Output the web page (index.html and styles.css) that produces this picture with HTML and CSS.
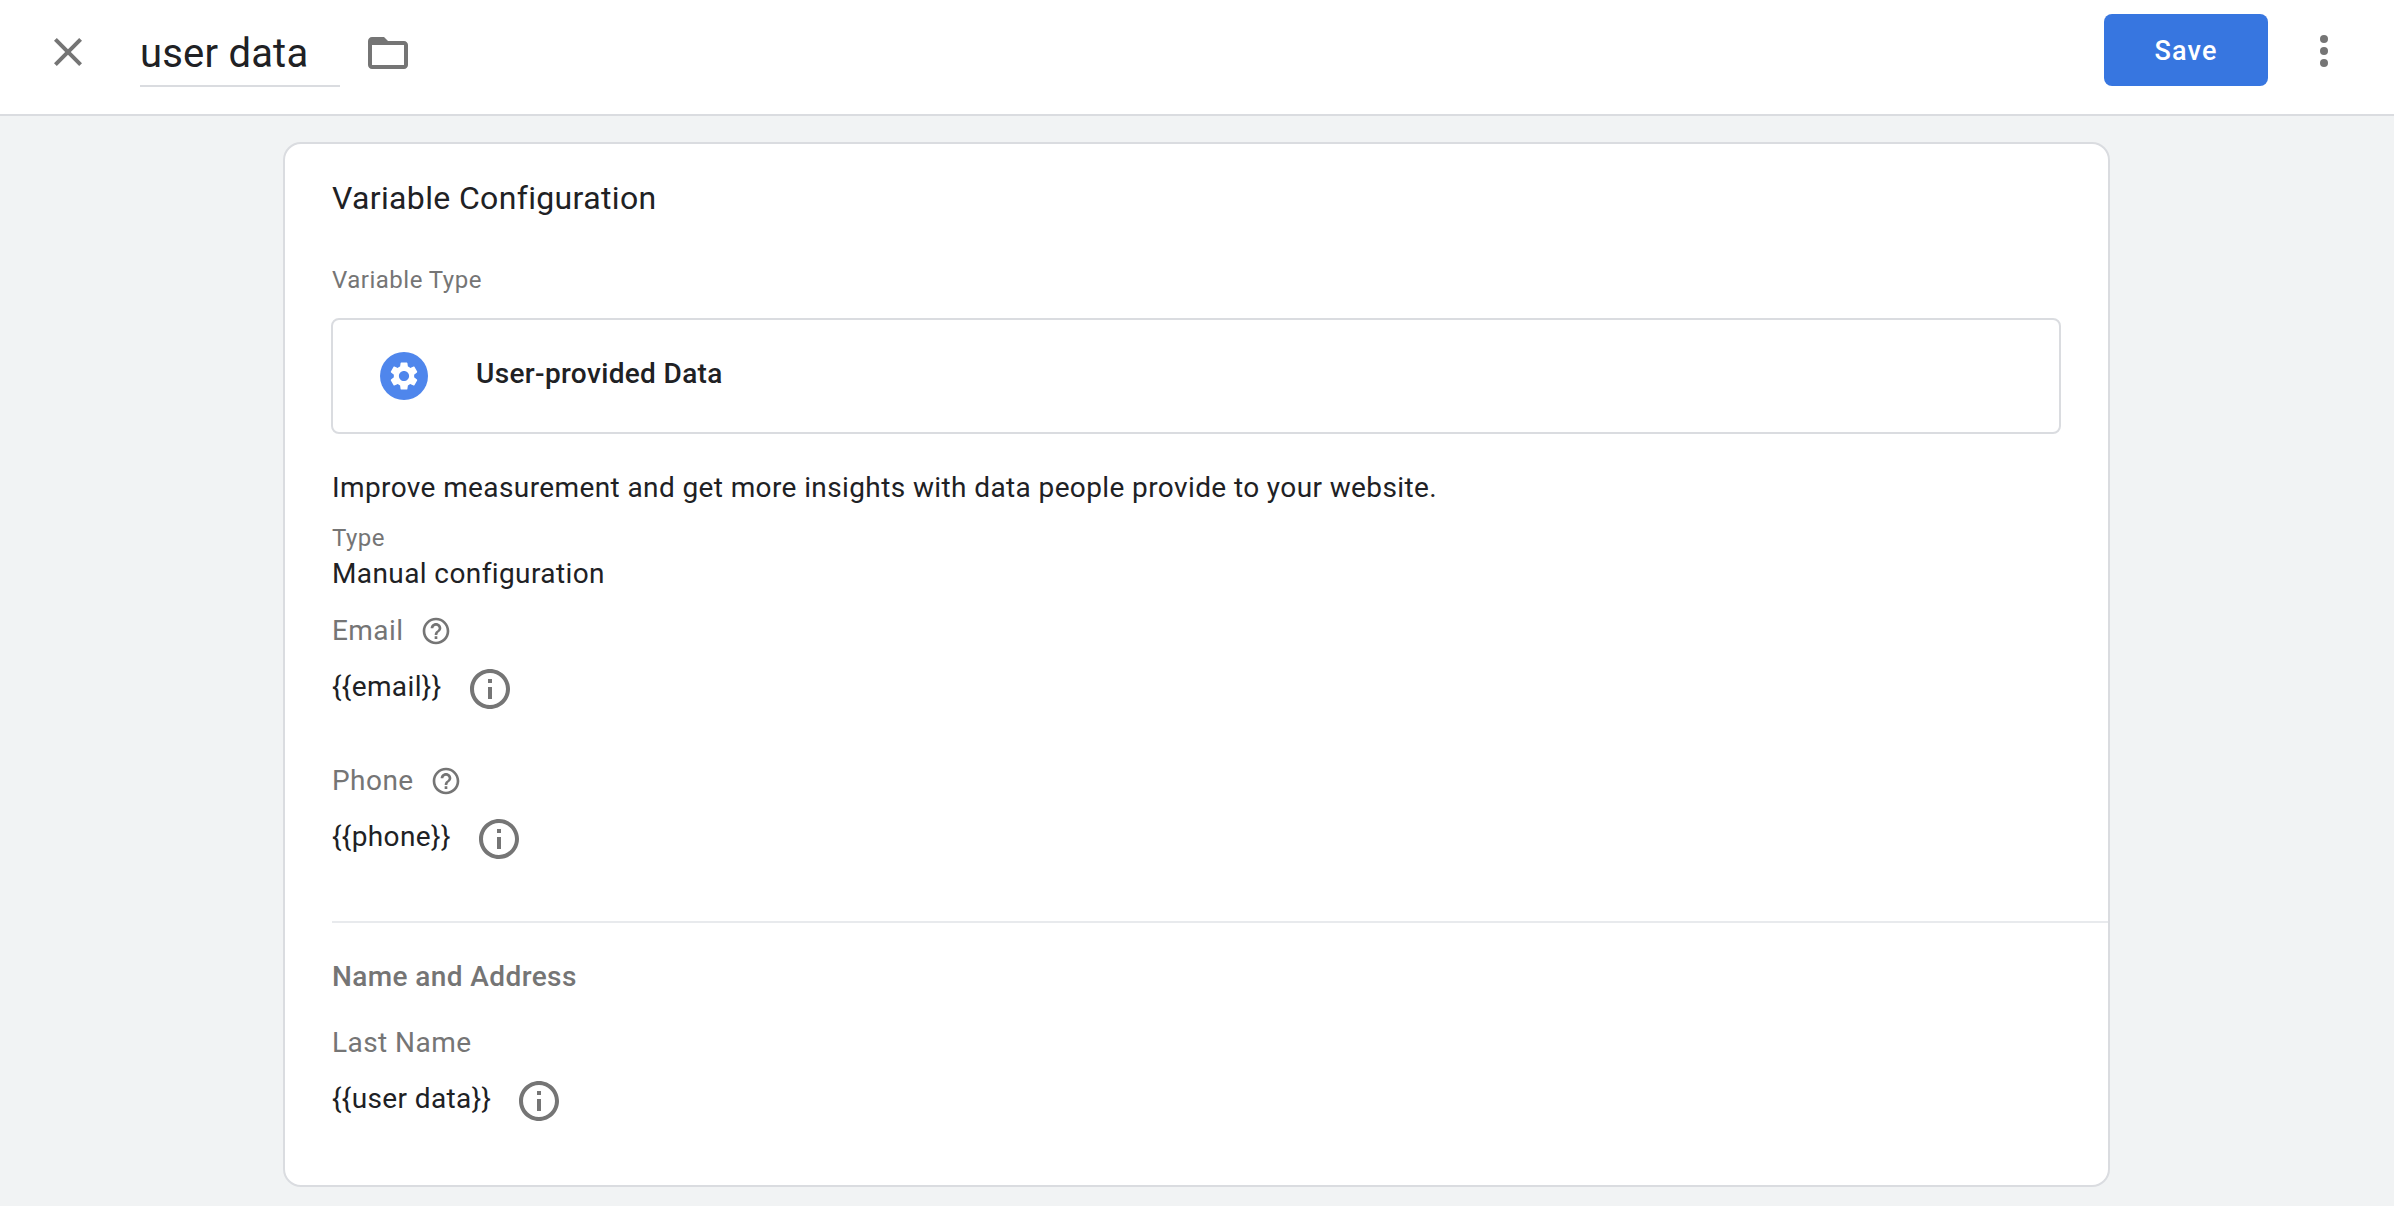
FILE: index.html
```html
<!DOCTYPE html>
<html lang="en">
<head>
<meta charset="utf-8">
<title>user data</title>
<link rel="stylesheet" href="styles.css">
</head>
<body>
<header class="topbar">
  <svg class="icon close" viewBox="0 0 24 24"><path d="M19 6.41L17.59 5 12 10.59 6.41 5 5 6.41 10.59 12 5 17.59 6.41 19 12 13.41 17.59 19 19 17.59 13.41 12z"/></svg>
  <div class="name-field">user data</div>
  <svg class="icon folder" viewBox="0 0 24 24"><path d="M20 6h-8l-2-2H4c-1.1 0-1.99.9-1.99 2L2 18c0 1.1.9 2 2 2h16c1.1 0 2-.9 2-2V8c0-1.1-.9-2-2-2zm0 12H4V8h16v10z"/></svg>
  <button class="save">Save</button>
  <svg class="icon kebab" viewBox="0 0 48 48"><circle cx="24" cy="12" r="4"/><circle cx="24" cy="24" r="4"/><circle cx="24" cy="36" r="4"/></svg>
</header>
<main class="page">
  <section class="card">
    <h1 class="card-title">Variable Configuration</h1>
    <div class="small-label type-head">Variable Type</div>
    <div class="type-box">
      <span class="gear-badge"><svg class="gear" viewBox="0 0 24 24"><path d="M19.14 12.94c.04-.3.06-.61.06-.94 0-.32-.02-.64-.07-.94l2.03-1.58c.18-.14.23-.41.12-.61l-1.92-3.32c-.12-.22-.37-.29-.59-.22l-2.39.96c-.5-.38-1.03-.7-1.62-.94l-.36-2.54c-.04-.24-.24-.41-.48-.41h-3.84c-.24 0-.43.17-.47.41l-.36 2.54c-.59.24-1.13.57-1.62.94l-2.39-.96c-.22-.08-.47 0-.59.22L2.74 8.87c-.12.21-.08.47.12.61l2.03 1.58c-.05.3-.09.63-.09.94s.02.64.07.94l-2.03 1.58c-.18.14-.23.41-.12.61l1.92 3.32c.12.22.37.29.59.22l2.39-.96c.5.38 1.03.7 1.62.94l.36 2.54c.05.24.24.41.48.41h3.84c.24 0 .44-.17.47-.41l.36-2.54c.59-.24 1.13-.56 1.62-.94l2.39.96c.22.08.47 0 .59-.22l1.92-3.32c.12-.22.07-.47-.12-.61l-2.01-1.58zM12 15.6c-1.98 0-3.6-1.62-3.6-3.6s1.62-3.6 3.6-3.6 3.6 1.62 3.6 3.6-1.62 3.6-3.6 3.6z"/></svg></span>
      <span class="type-name">User-provided Data</span>
    </div>
    <p class="body-text description">Improve measurement and get more insights with data people provide to your website.</p>
    <div class="small-label type-label">Type</div>
    <div class="body-text manual">Manual configuration</div>

    <div class="field-label email-label">Email
      <svg class="help" viewBox="0 0 24 24"><path d="M11 18h2v-2h-2v2zm1-16C6.48 2 2 6.48 2 12s4.48 10 10 10 10-4.48 10-10S17.52 2 12 2zm0 18c-4.41 0-8-3.59-8-8s3.59-8 8-8 8 3.59 8 8-3.59 8-8 8zm0-14c-2.21 0-4 1.79-4 4h2c0-1.1.9-2 2-2s2 .9 2 2c0 2-3 1.75-3 5h2c0-2.25 3-2.5 3-5 0-2.21-1.79-4-4-4z"/></svg>
    </div>
    <div class="value-row">
      <span class="value">{{email}}</span>
      <svg class="info" viewBox="0 0 24 24"><path d="M11 7h2v2h-2zm0 4h2v6h-2zm1-9C6.48 2 2 6.48 2 12s4.48 10 10 10 10-4.48 10-10S17.52 2 12 2zm0 18c-4.41 0-8-3.59-8-8s3.59-8 8-8 8 3.59 8 8-3.59 8-8 8z"/></svg>
    </div>

    <div class="field-label phone-label">Phone
      <svg class="help" viewBox="0 0 24 24"><path d="M11 18h2v-2h-2v2zm1-16C6.48 2 2 6.48 2 12s4.48 10 10 10 10-4.48 10-10S17.52 2 12 2zm0 18c-4.41 0-8-3.59-8-8s3.59-8 8-8 8 3.59 8 8-3.59 8-8 8zm0-14c-2.21 0-4 1.79-4 4h2c0-1.1.9-2 2-2s2 .9 2 2c0 2-3 1.75-3 5h2c0-2.25 3-2.5 3-5 0-2.21-1.79-4-4-4z"/></svg>
    </div>
    <div class="value-row">
      <span class="value">{{phone}}</span>
      <svg class="info" viewBox="0 0 24 24"><path d="M11 7h2v2h-2zm0 4h2v6h-2zm1-9C6.48 2 2 6.48 2 12s4.48 10 10 10 10-4.48 10-10S17.52 2 12 2zm0 18c-4.41 0-8-3.59-8-8s3.59-8 8-8 8 3.59 8 8-3.59 8-8 8z"/></svg>
    </div>

    <hr class="divider">
    <h2 class="section-title">Name and Address</h2>
    <div class="field-label last-name">Last Name</div>
    <div class="value-row">
      <span class="value">{{user data}}</span>
      <svg class="info" viewBox="0 0 24 24"><path d="M11 7h2v2h-2zm0 4h2v6h-2zm1-9C6.48 2 2 6.48 2 12s4.48 10 10 10 10-4.48 10-10S17.52 2 12 2zm0 18c-4.41 0-8-3.59-8-8s3.59-8 8-8 8 3.59 8 8-3.59 8-8 8z"/></svg>
    </div>
  </section>
</main>
</body>
</html>
```
FILE: styles.css
```css
* { box-sizing: border-box; }
html, body { margin: 0; height: 100%; }
body {
  background: #f1f3f4;
  color: #202124;
  font-family: Roboto, "Liberation Sans", sans-serif;
  overflow: hidden;
}
.topbar {
  display: flex;
  align-items: flex-start;
  height: 116px;
  padding: 14px 46px 0 44px;
  background: #fff;
  border-bottom: 2px solid #dadce0;
}
.icon { fill: #757575; width: 48px; height: 48px; flex: none; }
.close { margin-top: 14px; }
.name-field {
  width: 200px;
  height: 73px;
  margin-left: 48px;
  padding-top: 16px;
  font-size: 40px;
  line-height: 48px;
  letter-spacing: 0.2px;
  border-bottom: 2px solid #dadce0;
}
.folder { margin: 15px 0 0 24px; }
.save {
  width: 164px;
  height: 72px;
  margin-left: auto;
  padding: 2px 0 0;
  border: 0;
  border-radius: 8px;
  background: #3776e0;
  color: #fff;
  font: 500 27px/70px Roboto, sans-serif;
  letter-spacing: 1.2px;
}
.kebab { margin: 13px 0 0 32px; }

.page { padding: 26px 0 0 283px; }
.card {
  width: 1827px;
  padding: 34px 0 60px 47px;
  background: #fff;
  border: 2px solid #dadce0;
  border-radius: 18px;
}
.card-title { margin: 0; font-size: 32px; line-height: 40px; font-weight: 400; letter-spacing: 0.35px; }
.small-label { font-size: 24px; line-height: 30px; color: #757575; letter-spacing: 0.5px; }
.type-head { margin-top: 47px; }
.type-box {
  display: flex;
  align-items: center;
  width: 1730px;
  height: 116px;
  margin-top: 23px;
  margin-left: -1px;
  padding-left: 47px;
  border: 2px solid #dadce0;
  border-radius: 8px;
}
.gear-badge {
  display: flex;
  align-items: center;
  justify-content: center;
  width: 48px;
  height: 48px;
  border-radius: 50%;
  background: #4f86ec;
}
.gear { width: 34px; height: 34px; fill: #fff; }
.type-name { margin: 0 0 5px 48px; font-size: 28px; line-height: 36px; font-weight: 500; letter-spacing: 0.35px; }
.body-text { margin: 0; font-size: 28px; line-height: 36px; }
.description { margin-top: 36px; letter-spacing: 0.39px; }
.type-label { margin-top: 17px; }
.manual { margin-top: 3px; letter-spacing: 0.4px; }
.field-label {
  display: flex;
  align-items: center;
  font-size: 28px;
  line-height: 36px;
  color: #757575;
  letter-spacing: 0.45px;
}
.help { width: 32px; height: 32px; fill: #757575; margin-left: 16px; }
.email-label { margin-top: 21px; }
.phone-label { margin-top: 50px; }
.value-row { display: flex; align-items: center; height: 48px; margin-top: 16px; }
.value { margin-bottom: 5px; font-size: 28px; line-height: 36px; letter-spacing: 0.38px; }
.info { width: 48px; height: 48px; fill: #757575; margin-left: 24px; }
.divider { height: 2px; margin: 58px 0 0; border: 0; background: #e8eaed; }
.section-title {
  margin: 36px 0 0;
  font-size: 28px;
  line-height: 36px;
  font-weight: 500;
  color: #757575;
  letter-spacing: 0.4px;
}
.last-name { margin-top: 30px; }
```
